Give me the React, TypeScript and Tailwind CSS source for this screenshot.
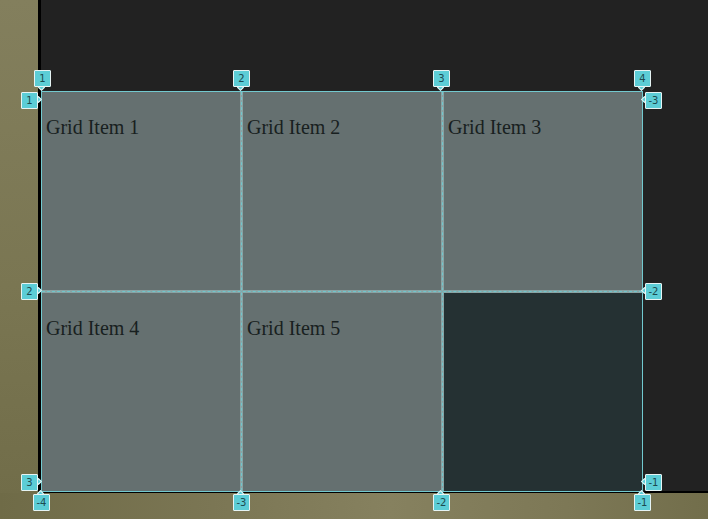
import React from "react";

type Badge = { label: string; x: number; y: number; dir: "down" | "up" | "left" | "right" };

const badges: Badge[] = [
	{ label: "1", x: 34, y: 70, dir: "down" },
	{ label: "2", x: 233, y: 70, dir: "down" },
	{ label: "3", x: 433, y: 70, dir: "down" },
	{ label: "4", x: 634, y: 70, dir: "down" },
	{ label: "1", x: 21, y: 92, dir: "right" },
	{ label: "2", x: 21, y: 283, dir: "right" },
	{ label: "3", x: 21, y: 474, dir: "right" },
	{ label: "-3", x: 645, y: 92, dir: "left" },
	{ label: "-2", x: 645, y: 283, dir: "left" },
	{ label: "-1", x: 645, y: 474, dir: "left" },
	{ label: "-4", x: 33, y: 494, dir: "up" },
	{ label: "-3", x: 233, y: 494, dir: "up" },
	{ label: "-2", x: 433, y: 494, dir: "up" },
	{ label: "-1", x: 634, y: 494, dir: "up" },
];

function LineBadge({ b }: { b: Badge }) {
	// little pointer towards the grid line
	const pointer =
		b.dir === "down"
			? "left-[5px] bottom-[-3px]"
			: b.dir === "up"
			? "left-[5px] top-[-3px]"
			: b.dir === "right"
			? "right-[-3px] top-[5px]"
			: "left-[-3px] top-[5px]";
	return (
		<div
			className="absolute w-[17px] h-[17px]"
			style={{ left: b.x, top: b.y }}
		>
			<div
				className={`absolute w-[5px] h-[5px] rotate-45 bg-[#5ccdd6] border border-[#e6f4f4] ${pointer}`}
			/>
			<div className="absolute inset-0 bg-[#5ccdd6] border border-[#e6f4f4] rounded-[1px] flex items-center justify-center text-[10px] leading-none text-[#1c4a4f] font-['DejaVu_Sans',sans-serif]">
				{b.label}
			</div>
		</div>
	);
}

export default function App() {
	const items = ["Grid Item 1", "Grid Item 2", "Grid Item 3", "Grid Item 4", "Grid Item 5"];

	return (
		<div className="relative w-[708px] h-[519px] overflow-hidden bg-[linear-gradient(180deg,#837f5d_0%,#7a7652_55%,#706c48_100%)]">
			<div className="absolute left-0 right-0 bottom-0 h-[26px] bg-[linear-gradient(90deg,#6f6b47_0%,#7b7654_30%,#86815f_55%,#7d7856_80%,#726e4b_100%)]" />
			<div className="relative ml-[38px] h-[493px] bg-[#222222] border-l-[3px] border-b-2 border-black pt-[91px]">
				<div className="relative w-[602px] border border-[#72c9cf]">
					<div className="grid grid-cols-[198px_198px_198px] grid-rows-[198px_198px] gap-[3px] bg-[#8aa3a4]">
						{items.map((t) => (
							<div
								key={t}
								className="bg-[#657070] pt-[20px] pl-[4px] text-[20px] text-[#182020] font-['Liberation_Serif',serif]"
							>
								{t}
							</div>
						))}
						<div className="bg-[#253133]" />
					</div>
					{/* dashed line overlays */}
					<div className="absolute top-0 bottom-0 left-[199px] border-l border-dashed border-[#6fc6cc]" />
					<div className="absolute top-0 bottom-0 left-[400px] border-l border-dashed border-[#6fc6cc]" />
					<div className="absolute left-0 right-0 top-[199px] border-t border-dashed border-[#6fc6cc]" />
				</div>
			</div>
			{badges.map((b, i) => (
				<LineBadge key={i} b={b} />
			))}
		</div>
	);
}
